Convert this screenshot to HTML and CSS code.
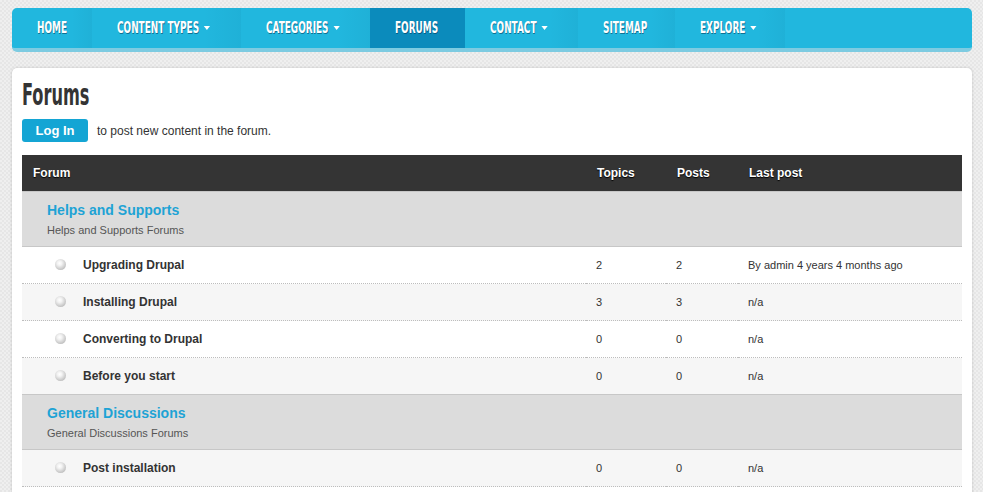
FILE: index.html
```html
<!DOCTYPE html>
<html lang="en">
<head>
<meta charset="utf-8">
<title>Forums</title>
<link rel="stylesheet" href="styles.css">
</head>
<body>
<nav class="menu">
  <ul class="menu-list">
    <li class="menu-item w-home"><a class="menu-link" href="#"><span class="label">HOME</span></a></li>
    <li class="menu-item w-types"><a class="menu-link" href="#"><span class="label">CONTENT TYPES<i class="caret"></i></span></a></li>
    <li class="menu-item w-cats"><a class="menu-link" href="#"><span class="label">CATEGORIES<i class="caret"></i></span></a></li>
    <li class="menu-item w-forums active"><a class="menu-link" href="#"><span class="label">FORUMS</span></a></li>
    <li class="menu-item w-contact"><a class="menu-link" href="#"><span class="label">CONTACT<i class="caret"></i></span></a></li>
    <li class="menu-item w-sitemap"><a class="menu-link" href="#"><span class="label">SITEMAP</span></a></li>
    <li class="menu-item w-explore"><a class="menu-link" href="#"><span class="label">EXPLORE<i class="caret"></i></span></a></li>
  </ul>
</nav>

<main class="card">
  <h1 class="page-title"><span class="title-text">Forums</span></h1>
  <div class="login-row">
    <a class="btn-login" href="#">Log In</a>
    <span class="login-note">to post new content in the forum.</span>
  </div>

  <table class="forum-table">
    <thead>
      <tr>
        <th class="col-forum">Forum</th>
        <th class="col-topics">Topics</th>
        <th class="col-posts">Posts</th>
        <th class="col-last">Last post</th>
      </tr>
    </thead>
    <tbody>
      <tr class="container-row">
        <td colspan="4">
          <a class="cat-title" href="#">Helps and Supports</a>
          <div class="cat-desc">Helps and Supports Forums</div>
        </td>
      </tr>
      <tr class="forum-row even">
        <td class="forum-cell"><span class="dot"></span><a class="forum-name" href="#">Upgrading Drupal</a></td>
        <td>2</td><td>2</td><td>By admin 4 years 4 months ago</td>
      </tr>
      <tr class="forum-row odd">
        <td class="forum-cell"><span class="dot"></span><a class="forum-name" href="#">Installing Drupal</a></td>
        <td>3</td><td>3</td><td>n/a</td>
      </tr>
      <tr class="forum-row even">
        <td class="forum-cell"><span class="dot"></span><a class="forum-name" href="#">Converting to Drupal</a></td>
        <td>0</td><td>0</td><td>n/a</td>
      </tr>
      <tr class="forum-row odd">
        <td class="forum-cell"><span class="dot"></span><a class="forum-name" href="#">Before you start</a></td>
        <td>0</td><td>0</td><td>n/a</td>
      </tr>
      <tr class="container-row">
        <td colspan="4">
          <a class="cat-title" href="#">General Discussions</a>
          <div class="cat-desc">General Discussions Forums</div>
        </td>
      </tr>
      <tr class="forum-row odd">
        <td class="forum-cell"><span class="dot"></span><a class="forum-name" href="#">Post installation</a></td>
        <td>0</td><td>0</td><td>n/a</td>
      </tr>
    </tbody>
  </table>
</main>
</body>
</html>
```

FILE: styles.css
```css
html, body {
  margin: 0;
  padding: 0;
}

body {
  padding: 8px 11px 0 12px;
  font-family: "Liberation Sans", Arial, sans-serif;
  color: #333;
  background-color: #ebebeb;
  background-image:
    repeating-conic-gradient(#e6e6e6 0 25%, #efefef 0 50%);
  background-size: 4px 4px;
  overflow: hidden;
}

/* ---------- Menu ---------- */
.menu {
  background: #21b7de;
  border-bottom: 4px solid #7dcbe1;
  border-radius: 5px;
  height: 40px;
}

.menu-list {
  list-style: none;
  margin: 0;
  padding: 0;
  display: flex;
  height: 40px;
}

.menu-item {
  height: 40px;
  background: linear-gradient(to right, rgba(0,0,0,0) 0%, rgba(0,0,0,0) 75%, rgba(0,60,90,0.05) 100%);
}

.menu-item:first-child {
  border-top-left-radius: 5px;
}

.menu-item.active {
  background: #0b8bbc;
}

.menu-link {
  display: block;
  height: 40px;
  padding-left: 25px;
  color: #fff;
  text-decoration: none;
  font-family: "DejaVu Sans Condensed", "DejaVu Sans", sans-serif;
  font-stretch: condensed;
  font-weight: bold;
  font-size: 16px;
  line-height: 40px;
  white-space: nowrap;
  text-shadow: 1px 1px 0 rgba(0, 50, 80, 0.55);
}

.label {
  display: inline-block;
  transform: scaleX(0.62);
  transform-origin: left center;
}

.caret {
  display: inline-block;
  width: 0;
  height: 0;
  margin-left: 8px;
  vertical-align: 3px;
  border-left: 5.5px solid transparent;
  border-right: 5.5px solid transparent;
  border-top: 4px solid #fff;
}

.w-home { width: 80px; }
.w-types { width: 149px; }
.w-cats { width: 129px; }
.w-forums { width: 95px; }
.w-contact { width: 113px; }
.w-sitemap { width: 97px; }
.w-explore { width: 110px; }

/* ---------- Card ---------- */
.card {
  margin-top: 16px;
  background: #fff;
  border-radius: 5px;
  box-shadow: 0 0 3px rgba(0, 0, 0, 0.18);
  padding: 9px 10px 20px;
}

.page-title {
  margin: 0;
  font-family: "DejaVu Sans Condensed", "DejaVu Sans", sans-serif;
  font-stretch: condensed;
  font-weight: bold;
  font-size: 30px;
  line-height: 36px;
  color: #343434;
}

.title-text {
  display: inline-block;
  transform: scaleX(0.6);
  transform-origin: left center;
}

.login-row {
  display: flex;
  align-items: center;
  gap: 9px;
  margin-top: 6px;
}

.btn-login {
  display: block;
  width: 66px;
  height: 23px;
  line-height: 23px;
  text-align: center;
  background: #14a5d4;
  border-radius: 3px;
  color: #fff;
  font-weight: bold;
  font-size: 13px;
  text-decoration: none;
}

.login-note {
  font-size: 12px;
  color: #333;
}

/* ---------- Table ---------- */
.forum-table {
  width: 100%;
  margin-top: 13px;
  border-collapse: collapse;
  font-size: 11px;
}

.forum-table th {
  height: 36px;
  padding: 0 11px;
  background: #343434;
  color: #fff;
  font-size: 12px;
  font-weight: bold;
  text-align: left;
  text-shadow: 0 1px 1px #000;
}

.col-topics { width: 58px; }
.col-posts { width: 50px; }
.col-last { width: 202px; }

.container-row td {
  background: #dcdcdc;
  padding: 9px 25px 9px;
  border-top: 1px solid #c7c7c7;
  border-bottom: 1px solid #c7c7c7;
}

.cat-title {
  display: block;
  font-size: 14px;
  font-weight: bold;
  line-height: 18px;
  color: #1ea3d5;
  text-decoration: none;
}

.cat-desc {
  margin-top: 4px;
  font-size: 11px;
  line-height: 14px;
  color: #555;
}

.forum-row td {
  height: 36px;
  padding: 0 10px;
  border-bottom: 1px dotted #bdbdbd;
  vertical-align: middle;
  color: #333;
}

.forum-row.even td { background: #fff; }
.forum-row.odd td { background: #f6f6f6; }

.forum-row td.forum-cell {
  padding-left: 33px;
}

.dot {
  display: inline-block;
  width: 11px;
  height: 11px;
  border-radius: 50%;
  margin-right: 17px;
  vertical-align: -1px;
  background: radial-gradient(circle at 42% 38%, #ffffff 0, #f2f2f2 25%, #c4c4c4 70%, #9c9c9c 100%);
}

.forum-name {
  font-size: 12px;
  font-weight: bold;
  color: #333;
  text-decoration: none;
}
```
